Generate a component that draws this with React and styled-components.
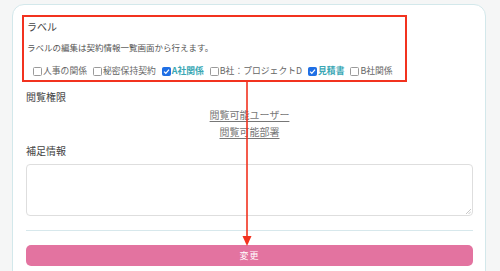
import React from "react";
import styled, { createGlobalStyle } from "styled-components";

const GlobalStyle = createGlobalStyle`
  html, body {
    margin: 0;
    padding: 0;
    background: #f5f6f6;
    font-family: "Noto Sans CJK JP", "Noto Sans", sans-serif;
    color: #555;
  }
`;

const Page = styled.div`
  width: 500px;
  height: 271px;
  overflow: hidden;
  padding: 4px 0 0 12px;
  box-sizing: border-box;
`;

const Card = styled.div`
  position: relative;
  width: 474px;
  height: 300px;
  box-sizing: border-box;
  background: #fff;
  border: 1px solid #d3e8eb;
  border-radius: 12px 12px 0 0;
  padding: 15px 12px 0 13px;
`;

const Title = styled.div`
  font-size: 10px;
  line-height: 14px;
  color: #444;
  margin-left: ${(p) => p.indent || 0}px;
  margin-top: ${(p) => p.top || 0}px;
`;

const Note = styled.div`
  font-size: 8.5px;
  line-height: 12px;
  margin: 7px 0 0 1px;
  color: #555;
`;

const CheckRow = styled.div`
  display: flex;
  align-items: center;
  gap: 6px;
  margin: 12px 0 0 7px;
  height: 12px;
`;

const CheckItem = styled.label`
  display: flex;
  align-items: center;
  gap: 1px;
  font-size: 8.8px;
  line-height: 12px;
  white-space: nowrap;
  color: ${(p) => (p.checked ? "#3aa7b4" : "#666")};
  font-weight: ${(p) => (p.checked ? 700 : 400)};
`;

const Box = styled.span`
  display: inline-flex;
  align-items: center;
  justify-content: center;
  width: 9px;
  height: 9px;
  box-sizing: border-box;
  border-radius: 1.5px;
  border: 1px solid ${(p) => (p.checked ? "#1f6fe5" : "#9a9a9a")};
  background: ${(p) => (p.checked ? "#1f6fe5" : "#fff")};
`;

const Links = styled.div`
  display: flex;
  flex-direction: column;
  align-items: center;
  gap: 5px;
  margin-top: 5px;
`;

const LinkText = styled.a`
  font-size: 10px;
  line-height: 12px;
  color: #777;
  text-decoration: underline;
  text-underline-offset: 2px;
`;

const TextArea = styled.div`
  height: 52px;
  margin-top: 6px;
  box-sizing: border-box;
  border: 1px solid #dedede;
  border-radius: 4px;
  position: relative;
`;

const Grip = styled.svg`
  position: absolute;
  right: 1px;
  bottom: 1px;
`;

const Divider = styled.div`
  height: 1px;
  background: #d7e8ec;
  margin-top: 14px;
`;

const Button = styled.div`
  height: 21px;
  margin-top: 14px;
  border-radius: 5px;
  background: #e373a0;
  color: #fff;
  font-size: 9px;
  display: flex;
  align-items: center;
  justify-content: center;
  letter-spacing: 1px;
`;

const Highlight = styled.div`
  position: absolute;
  left: 9px;
  top: 10px;
  width: 385px;
  height: 67px;
  box-sizing: border-box;
  border: 2px solid #f2321f;
`;

const Arrow = styled.svg`
  position: absolute;
  left: 228px;
  top: 76px;
`;

const labels = [
  { text: "人事の関係", checked: false },
  { text: "秘密保持契約", checked: false },
  { text: "A社関係", checked: true },
  { text: "B社：プロジェクトD", checked: false },
  { text: "見積書", checked: true },
  { text: "B社関係", checked: false },
];

const Check = () => (
  <svg width="7" height="7" viewBox="0 0 10 10">
    <path d="M1.5 5.2 L4 7.6 L8.6 2.4" fill="none" stroke="#fff" strokeWidth="1.8" />
  </svg>
);

export default function App() {
  return (
    <Page>
      <GlobalStyle />
      <Card>
        <Title indent={1}>ラベル</Title>
        <Note>ラベルの編集は契約情報一覧画面から行えます。</Note>
        <CheckRow>
          {labels.map((l) => (
            <CheckItem key={l.text} checked={l.checked}>
              <Box checked={l.checked}>{l.checked && <Check />}</Box>
              {l.text}
            </CheckItem>
          ))}
        </CheckRow>
        <Title top={13}>閲覧権限</Title>
        <Links>
          <LinkText>閲覧可能ユーザー</LinkText>
          <LinkText>閲覧可能部署</LinkText>
        </Links>
        <Title top={6}>補足情報</Title>
        <TextArea>
          <Grip width="5" height="5" viewBox="0 0 5 5">
            <path d="M5 0 L0 5 M5 2.5 L2.5 5" stroke="#bbb" strokeWidth="0.8" />
          </Grip>
        </TextArea>
        <Divider />
        <Button>変更</Button>
        <Highlight />
        <Arrow width="12" height="166" viewBox="0 0 12 166">
          <line x1="6" y1="0" x2="6" y2="156" stroke="#f2321f" strokeWidth="1.6" />
          <path d="M1.5 155 L10.5 155 L6 165 Z" fill="#f2321f" />
        </Arrow>
      </Card>
    </Page>
  );
}
